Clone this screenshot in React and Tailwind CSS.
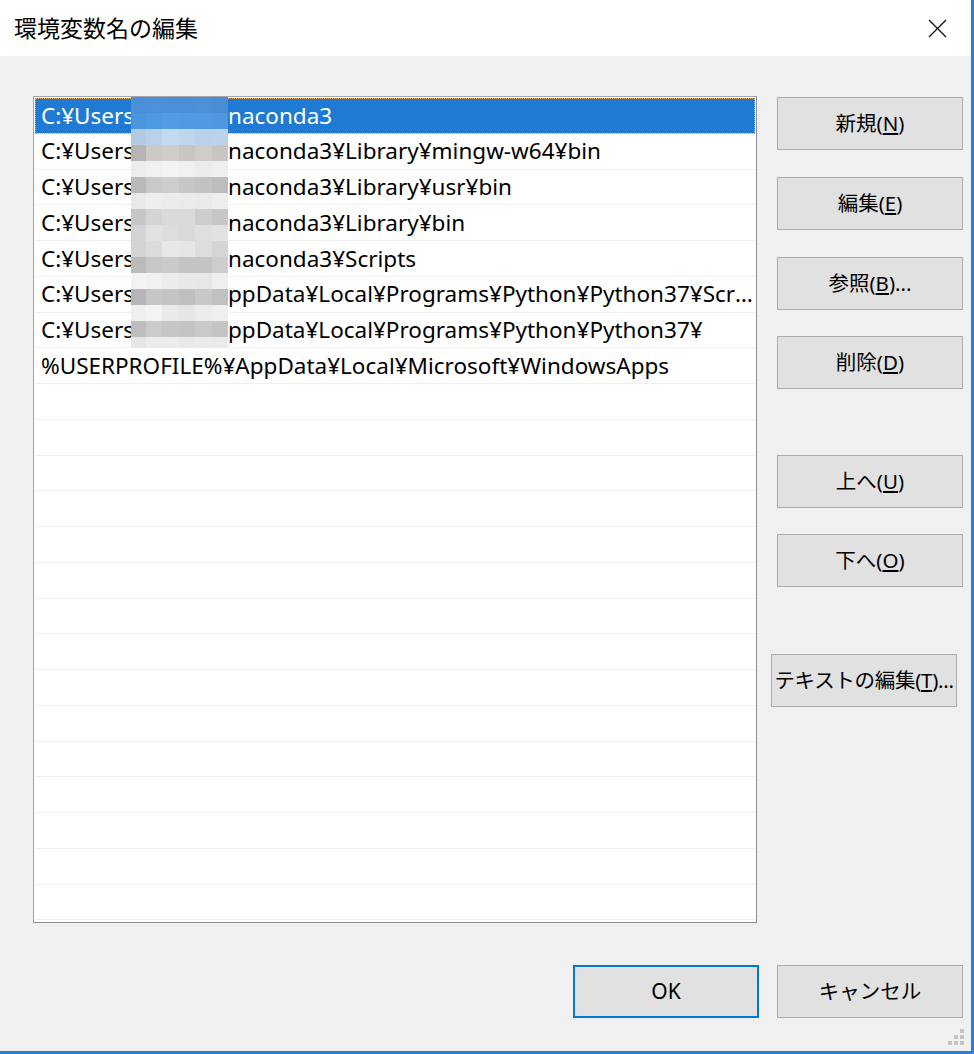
import { useState } from 'react'

const FONT = '"Noto Sans", "Noto Sans CJK JP", sans-serif'

const paths = [
  { head: 'C:¥Users', tail: 'naconda3', masked: true },
  { head: 'C:¥Users', tail: 'naconda3¥Library¥mingw-w64¥bin', masked: true },
  { head: 'C:¥Users', tail: 'naconda3¥Library¥usr¥bin', masked: true },
  { head: 'C:¥Users', tail: 'naconda3¥Library¥bin', masked: true },
  { head: 'C:¥Users', tail: 'naconda3¥Scripts', masked: true },
  { head: 'C:¥Users', tail: 'ppData¥Local¥Programs¥Python¥Python37¥Scripts¥', masked: true },
  { head: 'C:¥Users', tail: 'ppData¥Local¥Programs¥Python¥Python37¥', masked: true },
  { head: '%USERPROFILE%¥AppData¥Local¥Microsoft¥WindowsApps', tail: '', masked: false },
]

// blurred username block, 6 columns x 16 rows of ~16px cells
const mosaic = [
  ['#4d8fd6', '#4b90d8', '#4a8fd8', '#4a8fd8', '#4e90d6', '#4a8dd4'],
  ['#4b95dc', '#4e9ae0', '#519ce2', '#4f9ae0', '#4f9ae0', '#4e98de'],
  ['#b3cbe2', '#b8d0e8', '#c2daee', '#bfd7ec', '#b9d2e9', '#bad2ea'],
  ['#b8b4b1', '#cdc9c6', '#d1cdca', '#c9c5c3', '#cfcbc8', '#c8c5c3'],
  ['#ededed', '#f1f1f1', '#f3f3f3', '#f0f0f0', '#ececec', '#efefef'],
  ['#b9b9b9', '#c9c9c9', '#cdcdcd', '#c6c6c6', '#c2c2c2', '#bdbdbd'],
  ['#e9e9e9', '#eeeeee', '#ececec', '#ebebeb', '#eaeaea', '#eeeeee'],
  ['#c6c6c6', '#d4d4d4', '#dadada', '#dadada', '#cdcdcd', '#c6c6c6'],
  ['#d3d3d3', '#e1e1e1', '#dddddd', '#d9d9d9', '#dfdfdf', '#e2e2e2'],
  ['#d4d4d4', '#dcdcdc', '#e7e7e7', '#e6e6e6', '#dddddd', '#d5d5d5'],
  ['#bababa', '#c8c8c8', '#cacaca', '#c4c4c4', '#c4c4c4', '#cdcdcd'],
  ['#f3f3f3', '#f1f1f1', '#ececec', '#e8e8e8', '#e7e7e7', '#efefef'],
  ['#b6b6b6', '#c6c6c6', '#c4c4c4', '#bfbfbf', '#c8c8c8', '#c1c1c1'],
  ['#efefef', '#f3f3f3', '#eaeaea', '#e6e6e6', '#ececec', '#efefef'],
  ['#bdbdbd', '#cbcbcb', '#c6c6c6', '#c4c4c4', '#c9c9c9', '#c4c4c4'],
  ['#e6e6e6', '#ebebeb', '#ececec', '#e9e9e9', '#ebebeb', '#eaeaea'],
]

function Btn({ children, className = '' }) {
  return (
    <button className={`w-[186px] h-[53px] bg-[#e1e1e1] border border-[#adadad] text-[20.5px] text-black flex items-center justify-center ${className}`}>
      {children}
    </button>
  )
}

export default function App() {
  const [selected, setSelected] = useState(0)
  const rows = Array.from({ length: 23 }, (_, i) => paths[i] || null)

  return (
    <div
      className="relative w-[974px] h-[1054px] bg-[#f0f0f0] border-r-[3px] border-b-[3px] border-[#2b80d4] overflow-hidden"
      style={{ fontFamily: FONT }}
    >
      {/* title bar */}
      <div className="h-[56px] bg-white flex items-center justify-between pl-[14px] pr-[24px]">
        <span className="text-[23px] text-black">環境変数名の編集</span>
        <svg width="19" height="19" viewBox="0 0 19 19">
          <path d="M1 1 L18 18 M18 1 L1 18" stroke="#111" strokeWidth="1.3" fill="none" />
        </svg>
      </div>

      <div className="flex pl-[33px] pt-[40px]">
        {/* path list */}
        <div className="relative w-[724px] h-[827px] bg-white border border-[#a2a5ab] border-r-[#8d9098] border-b-[#8d9098] p-px overflow-hidden">
          {rows.map((row, i) => (
            <div
              key={i}
              onClick={() => row && setSelected(i)}
              className={`h-[35.75px] flex items-center pl-[6px] pr-[2px] text-[22.5px] whitespace-nowrap border-b border-[#f0f0f0] ${
                i === selected ? 'bg-[#1e7ad3] text-white outline outline-dotted outline-[#e3a45c] -outline-offset-1' : 'text-black'
              }`}
            >
              {row && row.masked && (
                <>
                  <span className="w-[187px] shrink-0">{row.head}</span>
                  <span className="overflow-hidden text-ellipsis min-w-0">{row.tail}</span>
                </>
              )}
              {row && !row.masked && <span>{row.head}</span>}
            </div>
          ))}

          {/* blurred user name */}
          <div className="absolute left-[97px] top-0 w-[97px] h-[251px] overflow-hidden flex flex-col">
            {mosaic.map((cells, r) => (
              <div key={r} className="flex h-[16px] shrink-0">
                {cells.map((c, k) => (
                  <div key={k} className={k === 0 ? 'w-[15px] h-full' : 'w-[16.4px] h-full'} style={{ background: c }} />
                ))}
              </div>
            ))}
          </div>
        </div>

        {/* side buttons */}
        <div className="ml-[20px] flex flex-col">
          <Btn className="mt-px"><span>新規(<u>N</u>)</span></Btn>
          <Btn className="mt-[27px]"><span>編集(<u>E</u>)</span></Btn>
          <Btn className="mt-[27px]"><span>参照(<u>B</u>)...</span></Btn>
          <Btn className="mt-[26px]"><span>削除(<u>D</u>)</span></Btn>
          <Btn className="mt-[66px]"><span>上へ(<u>U</u>)</span></Btn>
          <Btn className="mt-[26px]"><span>下へ(<u>O</u>)</span></Btn>
          <Btn className="mt-[67px] -ml-[6px] tracking-[-0.3px]"><span>テキストの編集(<u>T</u>)...</span></Btn>
        </div>
      </div>

      {/* bottom buttons */}
      <div className="mt-[42px] flex justify-end gap-[18px] pr-[8px]">
        <button className="w-[186px] h-[53px] bg-[#e1e1e1] border-2 border-[#0078d7] text-[21px] text-black">OK</button>
        <Btn>キャンセル</Btn>
      </div>

      {/* size grip */}
      <svg className="absolute right-[6px] bottom-[5px]" width="17" height="17" viewBox="0 0 17 17">
        <rect x="12" y="0" width="4" height="4" fill="#c4c4c4" />
        <rect x="6" y="6" width="4" height="4" fill="#c4c4c4" />
        <rect x="12" y="6" width="4" height="4" fill="#c4c4c4" />
        <rect x="0" y="12" width="4" height="4" fill="#c4c4c4" />
        <rect x="6" y="12" width="4" height="4" fill="#c4c4c4" />
        <rect x="12" y="12" width="4" height="4" fill="#c4c4c4" />
      </svg>
    </div>
  )
}
